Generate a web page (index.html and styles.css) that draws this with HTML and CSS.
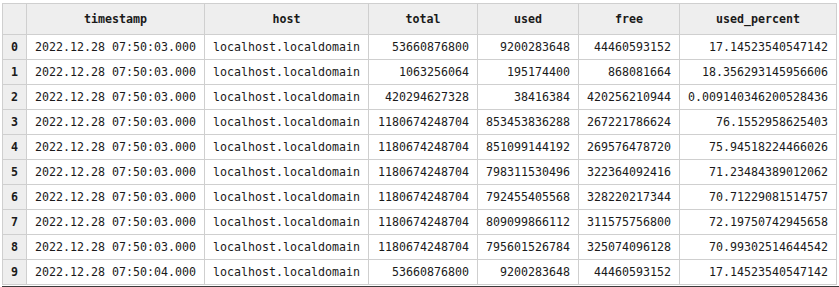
FILE: index.html
```html
<!DOCTYPE html>
<html lang="en">
<head>
    <meta charset="UTF-8">
    <title>memory usage</title>
    <link rel="stylesheet" href="styles.css">
</head>
<body>
    <div class="frame">
        <table class="data">
            <colgroup>
                <col class="c-idx">
                <col class="c-ts">
                <col class="c-host">
                <col class="c-total">
                <col class="c-used">
                <col class="c-free">
                <col class="c-pct">
            </colgroup>
            <thead>
                <tr>
                    <th class="idx"></th>
                    <th>timestamp</th>
                    <th>host</th>
                    <th>total</th>
                    <th>used</th>
                    <th>free</th>
                    <th>used_percent</th>
                </tr>
            </thead>
            <tbody>
                <tr><th class="idx">0</th><td>2022.12.28 07:50:03.000</td><td>localhost.localdomain</td><td class="num">53660876800</td><td class="num">9200283648</td><td class="num">44460593152</td><td class="num">17.14523540547142</td></tr>
                <tr><th class="idx">1</th><td>2022.12.28 07:50:03.000</td><td>localhost.localdomain</td><td class="num">1063256064</td><td class="num">195174400</td><td class="num">868081664</td><td class="num">18.356293145956606</td></tr>
                <tr><th class="idx">2</th><td>2022.12.28 07:50:03.000</td><td>localhost.localdomain</td><td class="num">420294627328</td><td class="num">38416384</td><td class="num">420256210944</td><td class="num">0.009140346200528436</td></tr>
                <tr><th class="idx">3</th><td>2022.12.28 07:50:03.000</td><td>localhost.localdomain</td><td class="num">1180674248704</td><td class="num">853453836288</td><td class="num">267221786624</td><td class="num">76.1552958625403</td></tr>
                <tr><th class="idx">4</th><td>2022.12.28 07:50:03.000</td><td>localhost.localdomain</td><td class="num">1180674248704</td><td class="num">851099144192</td><td class="num">269576478720</td><td class="num">75.94518224466026</td></tr>
                <tr><th class="idx">5</th><td>2022.12.28 07:50:03.000</td><td>localhost.localdomain</td><td class="num">1180674248704</td><td class="num">798311530496</td><td class="num">322364092416</td><td class="num">71.23484389012062</td></tr>
                <tr><th class="idx">6</th><td>2022.12.28 07:50:03.000</td><td>localhost.localdomain</td><td class="num">1180674248704</td><td class="num">792455405568</td><td class="num">328220217344</td><td class="num">70.71229081514757</td></tr>
                <tr><th class="idx">7</th><td>2022.12.28 07:50:03.000</td><td>localhost.localdomain</td><td class="num">1180674248704</td><td class="num">809099866112</td><td class="num">311575756800</td><td class="num">72.19750742945658</td></tr>
                <tr><th class="idx">8</th><td>2022.12.28 07:50:03.000</td><td>localhost.localdomain</td><td class="num">1180674248704</td><td class="num">795601526784</td><td class="num">325074096128</td><td class="num">70.99302514644542</td></tr>
                <tr><th class="idx">9</th><td>2022.12.28 07:50:04.000</td><td>localhost.localdomain</td><td class="num">53660876800</td><td class="num">9200283648</td><td class="num">44460593152</td><td class="num">17.14523540547142</td></tr>
            </tbody>
        </table>
        <div class="edge"></div>
    </div>
</body>
</html>
```

FILE: styles.css
```css
body {
    margin: 0;
    background-color: #fff;
    font-family: 'DejaVu Sans Mono', monospace;
    color: #1a1a1a;
}

.frame {
    padding: 3px 0 0 2px;
}

.data {
    border-collapse: collapse;
    table-layout: fixed;
    width: 834px;
    font-size: 11.63px;
    line-height: 16px;
}

.c-idx { width: 24px; }
.c-ts { width: 178px; }
.c-host { width: 164px; }
.c-total { width: 109px; }
.c-used { width: 101px; }
.c-free { width: 101px; }
.c-pct { width: 157px; }

.data th,
.data td {
    border: 1px solid #cfcfcf;
    padding: 4px 8px;
    white-space: nowrap;
    overflow: hidden;
}

.data thead th {
    background-color: #eeeeee;
    font-weight: bold;
    text-align: center;
    padding: 7px 8px;
}

.data td {
    text-align: left;
}

.data td.num {
    text-align: right;
}

.data th.idx {
    background-color: #eeeeee;
    font-weight: bold;
    text-align: center;
    padding: 4px 0;
}

.edge {
    margin-top: 1px;
    height: 2px;
    background-color: #3a3a3a;
}
```
